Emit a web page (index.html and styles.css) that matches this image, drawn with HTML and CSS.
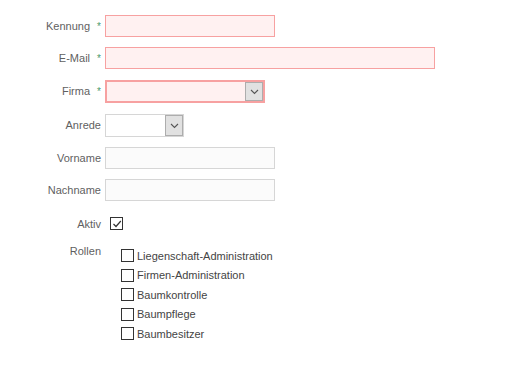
FILE: index.html
```html
<!DOCTYPE html>
<html lang="de">

<head>
  <meta charset="UTF-8">
  <meta name="viewport" content="width=device-width, initial-scale=1.0">
  <title>Benutzer</title>
  <link rel="stylesheet" href="styles.css">
</head>

<body>
  <form class="user-form">
    <label class="label" for="kennung">Kennung <span class="req">*</span></label>
    <div class="field"><input type="text" id="kennung" class="text required short"></div>

    <label class="label" for="email">E-Mail <span class="req">*</span></label>
    <div class="field"><input type="text" id="email" class="text required long"></div>

    <label class="label" for="firma">Firma <span class="req">*</span></label>
    <div class="field field-select">
      <div class="select required firma">
        <span class="select-value"></span>
        <span class="select-arrow">
          <svg width="9" height="6" viewBox="0 0 9 6"><path d="M1 1l3.5 3.5L8 1" fill="none" stroke="#555" stroke-width="1.1"/></svg>
        </span>
      </div>
    </div>

    <label class="label" for="anrede">Anrede</label>
    <div class="field field-select">
      <div class="select anrede">
        <span class="select-value"></span>
        <span class="select-arrow">
          <svg width="9" height="6" viewBox="0 0 9 6"><path d="M1 1l3.5 3.5L8 1" fill="none" stroke="#555" stroke-width="1.1"/></svg>
        </span>
      </div>
    </div>

    <label class="label" for="vorname">Vorname</label>
    <div class="field field-text"><input type="text" id="vorname" class="text short"></div>

    <label class="label" for="nachname">Nachname</label>
    <div class="field"><input type="text" id="nachname" class="text short"></div>

    <label class="label label-check">Aktiv</label>
    <div class="field field-check">
      <span class="box checked">
        <svg width="10" height="10" viewBox="0 0 10 10"><path d="M1.5 5l2.5 2.5L8.8 2" fill="none" stroke="#333" stroke-width="1.2"/></svg>
      </span>
    </div>

    <label class="label label-top">Rollen</label>
    <div class="field roles">
      <div class="role"><span class="box"></span>Liegenschaft-Administration</div>
      <div class="role"><span class="box"></span>Firmen-Administration</div>
      <div class="role"><span class="box"></span>Baumkontrolle</div>
      <div class="role"><span class="box"></span>Baumpflege</div>
      <div class="role"><span class="box"></span>Baumbesitzer</div>
    </div>
  </form>
</body>

</html>
```

FILE: styles.css
```css
body {
  margin: 8px;
  font-family: "Liberation Sans", Arial, sans-serif;
  font-size: 11px;
  color: #555;
  background: #fff;
}

.user-form {
  display: grid;
  grid-template-columns: 93px 1fr;
  column-gap: 4px;
  row-gap: 10px;
  padding-top: 7px;
  align-items: center;
}

.label {
  text-align: right;
  color: #5f5f5f;
  white-space: nowrap;
}

.req {
  display: inline-block;
  margin-left: 4px;
  color: #4c9a6c;
  font-size: 10px;
}

.field {
  display: flex;
  align-items: center;
}

.field-select {
  padding-top: 1px;
}

/* Eingabefelder */
.text {
  box-sizing: border-box;
  height: 22px;
  margin: 0;
  padding: 2px 4px;
  border: 1px solid #d6d6d6;
  background: #fbfbfb;
  font: inherit;
}

.text.short {
  width: 170px;
}

.text.long {
  width: 330px;
}

.required {
  border: 1px solid #f7a1a1 !important;
  background: #fff1f1 !important;
}

.select {
  box-sizing: border-box;
  display: flex;
  height: 23px;
  border: 1px solid #d6d6d6;
  background: #fff;
}

.select.firma {
  width: 160px;
  border-width: 2px !important;
}

.select.anrede {
  width: 79px;
}

.select-value {
  flex: 1;
}

.select-arrow {
  width: 16px;
  display: flex;
  align-items: center;
  justify-content: center;
  background: #e1e1e1;
  border: 1px solid #adadad;
}

.label-check {
  padding-top: 6px;
}

.field-check {
  padding-top: 6px;
  padding-left: 5px;
}

.box {
  box-sizing: border-box;
  display: inline-flex;
  align-items: center;
  justify-content: center;
  width: 13px;
  height: 13px;
  border: 1px solid #333;
  background: #fff;
  margin-right: 3px;
  flex: none;
}

.label-top {
  align-self: start;
  padding-top: 5px;
}

.roles {
  flex-direction: column;
  align-items: flex-start;
  padding-left: 16px;
  padding-top: 6px;
}

.role {
  display: flex;
  align-items: center;
  height: 19.5px;
  color: #444;
}
```
